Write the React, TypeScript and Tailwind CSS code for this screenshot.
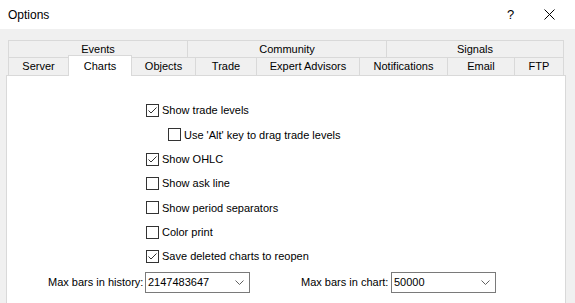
const topTabs = [
  { label: 'Events', w: 'w-[179px]' },
  { label: 'Community', w: 'w-[199px]' },
  { label: 'Signals', w: 'w-[178px]' },
];

const bottomTabs = [
  { label: 'Server', w: 'w-[60px]' },
  { label: 'Charts', w: 'w-[64px]', active: true },
  { label: 'Objects', w: 'w-[63px]' },
  { label: 'Trade', w: 'w-[61px]' },
  { label: 'Expert Advisors', w: 'w-[103px]' },
  { label: 'Notifications', w: 'w-[88px]' },
  { label: 'Email', w: 'w-[67px]' },
  { label: 'FTP', w: 'w-[50px]' },
];

const options = [
  { label: 'Show trade levels', checked: true },
  { label: "Use 'Alt' key to drag trade levels", checked: false, indent: true },
  { label: 'Show OHLC', checked: true },
  { label: 'Show ask line', checked: false },
  { label: 'Show period separators', checked: false },
  { label: 'Color print', checked: false },
  { label: 'Save deleted charts to reopen', checked: true },
];

function Checkbox({ checked }: { checked: boolean }) {
  return (
    <div className="w-[13px] h-[13px] border border-[#333333] bg-white flex items-center justify-center flex-shrink-0">
      {checked && (
        <svg width="11" height="11" viewBox="0 0 11 11">
          <path d="M1.5 5.5 L4 8 L9.5 2.5" fill="none" stroke="#333333" strokeWidth="1" />
        </svg>
      )}
    </div>
  );
}

function Combo({ value }: { value: string }) {
  return (
    <div className="w-[105px] h-[21px] border border-[#7a7a7a] bg-white flex items-center justify-between pl-[2px] pr-[5px]">
      <span>{value}</span>
      <svg width="9" height="5" viewBox="0 0 9 5">
        <path d="M0.5 0.5 L4.5 4.5 L8.5 0.5" fill="none" stroke="#606060" strokeWidth="1" />
      </svg>
    </div>
  );
}

export default function App() {
  return (
    <div
      className="w-[575px] h-[303px] bg-[#f0f0f0] overflow-hidden text-[11px] text-black"
      style={{ fontFamily: '"Liberation Sans", Arial, sans-serif' }}
    >
      {/* Title bar */}
      <div className="h-[29px] bg-white flex items-center pl-[8px]">
        <span className="text-[12px] flex-1">Options</span>
        <span className="text-[13px] w-[6px] mr-[31px]">?</span>
        <svg width="11" height="11" viewBox="0 0 11 11" className="mr-[20px]">
          <path d="M0.5 0.5 L10.5 10.5 M10.5 0.5 L0.5 10.5" stroke="#000000" strokeWidth="1" />
        </svg>
      </div>

      {/* Tabs */}
      <div className="pt-[11px]">
        <div className="ml-[8px] flex h-[17px]">
          {topTabs.map((t, i) => (
            <div
              key={t.label}
              className={
                'h-full flex items-center justify-center border-t border-l border-[#d9d9d9] ' +
                t.w +
                (i === topTabs.length - 1 ? ' border-r' : '')
              }
            >
              {t.label}
            </div>
          ))}
        </div>
        <div className="ml-[8px] flex items-end h-[18px]">
          {bottomTabs.map((t, i) =>
            t.active ? (
              <div
                key={t.label}
                className={
                  'relative z-10 h-[21px] -mb-px bg-white border-t border-l border-r border-[#d9d9d9] flex items-start justify-center pt-[2px] ' +
                  t.w
                }
              >
                {t.label}
              </div>
            ) : (
              <div
                key={t.label}
                className={
                  'h-full flex items-center justify-center border-t border-[#d9d9d9] ' +
                  t.w +
                  (bottomTabs[i - 1]?.active ? '' : ' border-l') +
                  (i === bottomTabs.length - 1 ? ' border-r' : '')
                }
              >
                {t.label}
              </div>
            )
          )}
        </div>

        {/* Panel */}
        <div className="ml-[6px] w-[560px] h-[240px] bg-white border border-[#d9d9d9] pt-[28px]">
          <div className="flex flex-col gap-[11.33px] pl-[139px]">
            {options.map((o) => (
              <div
                key={o.label}
                className={'h-[13px] flex items-center ' + (o.indent ? 'pl-[22px]' : '')}
              >
                <Checkbox checked={o.checked} />
                <span className="ml-[3px] whitespace-nowrap">{o.label}</span>
              </div>
            ))}
          </div>

          <div className="flex items-center mt-[9px] pl-[41px]">
            <span className="w-[97px] whitespace-nowrap">Max bars in history:</span>
            <Combo value="2147483647" />
            <span className="ml-[51px] w-[90px] whitespace-nowrap">Max bars in chart:</span>
            <Combo value="50000" />
          </div>
        </div>
      </div>
    </div>
  );
}
